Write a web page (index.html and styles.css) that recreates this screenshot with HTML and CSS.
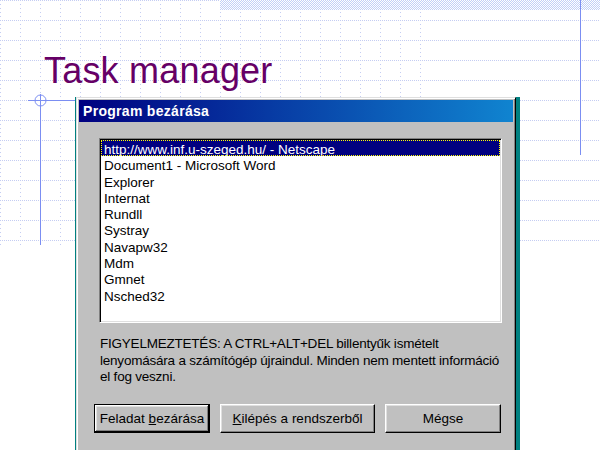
FILE: index.html
```html
<!DOCTYPE html>
<html lang="hu">
<head>
  <meta charset="UTF-8" />
  <title>Task manager</title>
  <link rel="stylesheet" href="styles.css">
</head>
<body>
  <div class="slide">
    <svg class="grid" width="600" height="246">
      <defs>
        <pattern id="hdots" width="20" height="20" patternUnits="userSpaceOnUse">
          <line x1="0" y1="0.5" x2="20" y2="0.5" stroke="#c5cdf2" stroke-dasharray="1 1" />
        </pattern>
        <pattern id="vdots" width="20" height="20" patternUnits="userSpaceOnUse">
          <line x1="0.5" y1="0" x2="0.5" y2="20" stroke="#c5cdf2" stroke-dasharray="1 3" />
        </pattern>
      </defs>
      <rect width="600" height="246" fill="url(#hdots)" />
      <rect width="431" height="246" fill="url(#vdots)" />
    </svg>
    <div class="band"></div>
    <svg class="guides" width="600" height="450">
      <line x1="40.5" y1="94" x2="40.5" y2="245" />
      <line x1="28" y1="100.5" x2="76" y2="100.5" />
      <circle cx="40.5" cy="100.5" r="5.5" />
      <line x1="580.5" y1="0" x2="580.5" y2="155" />
    </svg>

    <h1 class="title">Task manager</h1>

    <div class="desktop">
      <div class="window">
        <div class="titlebar">Program bezárása</div>
        <div class="window-body">
          <ul class="tasks">
            <li class="selected">http://www.inf.u-szeged.hu/ - Netscape</li>
            <li>Document1 - Microsoft Word</li>
            <li>Explorer</li>
            <li>Internat</li>
            <li>Rundll</li>
            <li>Systray</li>
            <li>Navapw32</li>
            <li>Mdm</li>
            <li>Gmnet</li>
            <li>Nsched32</li>
          </ul>
          <p class="warning">
            FIGYELMEZTETÉS: A CTRL+ALT+DEL billentyűk ismételt<br>
            lenyomására a számítógép újraindul. Minden nem mentett információ<br>
            el fog veszni.
          </p>
          <div class="buttons">
            <button class="btn default">Feladat <u>b</u>ezárása</button>
            <button class="btn wide"><u>K</u>ilépés a rendszerből</button>
            <button class="btn">Mégse</button>
          </div>
        </div>
      </div>
    </div>
  </div>
</body>
</html>
```

FILE: styles.css
```css
body {
  margin: 0;
  padding: 0;
  background: #fff;
}

.slide {
  position: relative;
  width: 600px;
  height: 450px;
  padding-top: 53px;
  box-sizing: border-box;
  overflow: hidden;
  background: #fff;
  font-family: "Liberation Sans", Arial, sans-serif;
}

/* slide master decoration */
.grid {
  position: absolute;
  left: 0;
  top: 0;
}

.band {
  position: absolute;
  left: 220px;
  top: 0;
  width: 380px;
  height: 10px;
  background: repeating-conic-gradient(#c3d0f7 0 25%, #fff 0 50%) 0 0 / 2px 2px;
}

.guides {
  position: absolute;
  left: 0;
  top: 0;
  fill: none;
  stroke: #7b8ef2;
  stroke-width: 1;
}

.title {
  position: relative;
  margin: 0 0 0 44px;
  font-size: 36px;
  line-height: 36px;
  font-weight: normal;
  letter-spacing: 0.2px;
  color: #660066;
}

/* the screenshot */
.desktop {
  position: relative;
  width: 445px;
  height: 360px;
  margin: 8px 0 0 75px;
  padding: 0 4px 0 1px;
  box-sizing: border-box;
  background: #008080;
}

.window {
  height: 100%;
  box-sizing: border-box;
  padding: 2px;
  background: #c0c0c0;
  border: 1px solid;
  border-color: #dfdfdf #000 #000 #dfdfdf;
  box-shadow: inset 1px 1px #fff, inset -1px -1px #808080;
  font-size: 13.5px;
  color: #000;
}

.titlebar {
  height: 22px;
  line-height: 22px;
  padding-left: 4px;
  background: linear-gradient(to right, #000080, #1084d0);
  color: #fff;
  font-size: 14px;
  font-weight: bold;
  letter-spacing: 0.3px;
}

.window-body {
  padding: 16px 11px 0 20px;
}

.tasks {
  list-style: none;
  margin: 0;
  height: 185px;
  box-sizing: border-box;
  padding: 1px;
  background: #fff;
  border: 1px solid;
  border-color: #808080 #fff #fff #808080;
  box-shadow: inset 1px 1px #000, inset -1px -1px #dfdfdf;
}

.tasks li {
  height: 16.3px;
  box-sizing: border-box;
  padding: 4px 0 0 3px;
  line-height: 12.3px;
  white-space: nowrap;
}

.tasks li.selected {
  background: #000080;
  color: #fff;
  outline: 1px dotted #ffff00;
  outline-offset: -1px;
}

.warning {
  margin: 13px 0 0 1px;
  line-height: 16.5px;
  letter-spacing: -0.22px;
  white-space: nowrap;
}

.buttons {
  display: flex;
  gap: 10px;
  margin: 18px 0 0 -5px;
}

.btn {
  width: 116px;
  height: 29px;
  padding: 0;
  background: #c0c0c0;
  border: 1px solid;
  border-color: #fff #000 #000 #fff;
  box-shadow: inset -1px -1px #808080, inset 1px 1px #dfdfdf;
  font-family: "Liberation Sans", Arial, sans-serif;
  font-size: 13.5px;
  color: #000;
}

.btn.wide {
  width: 155px;
}

.btn.default {
  border-color: #000;
  box-shadow: inset -1px -1px #000, inset 1px 1px #fff, inset -2px -2px #808080, inset 2px 2px #dfdfdf;
}
```
